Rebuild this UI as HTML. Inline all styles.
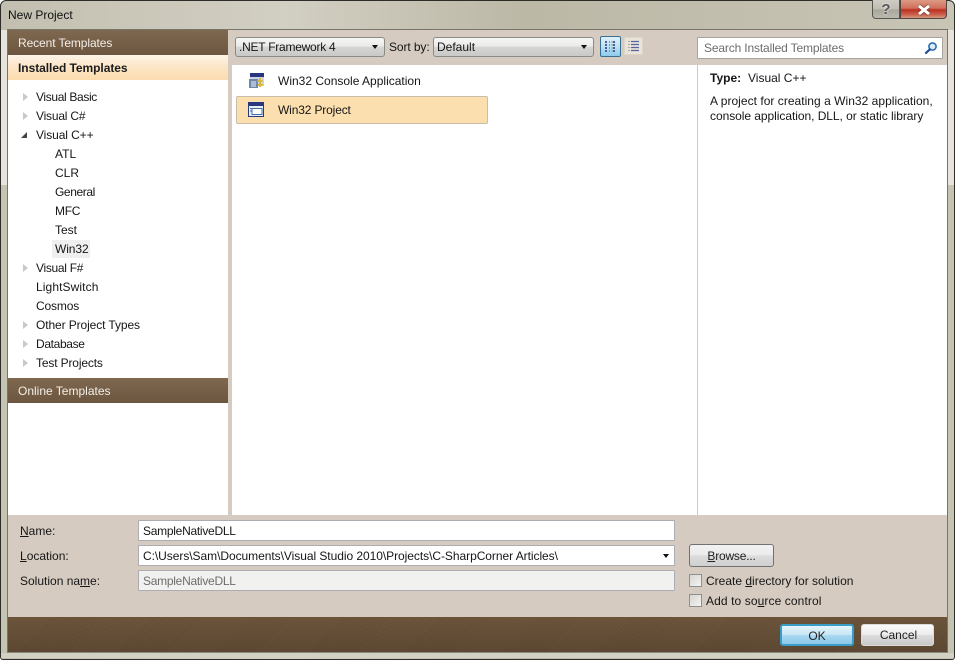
<!DOCTYPE html>
<html><head><meta charset="utf-8"><title>New Project</title>
<style>
html,body{margin:0;padding:0;width:955px;height:660px;overflow:hidden;background:#fff}
body{position:relative;font:12px/16px "Liberation Sans",sans-serif;color:#161616}
.a,.t{position:absolute}
.t{white-space:nowrap}
.hdr{background:linear-gradient(#7f6850,#6d563f);color:#f3eee8}
.tw{width:0;height:0;position:absolute;border-style:solid}
.c{left:23px;border-width:4px 0 4px 5px;border-color:transparent transparent transparent #c9c9c9}
.combo{position:absolute;height:18px;border:1px solid #8a8a86;border-radius:3px;background:linear-gradient(#f6f6f5 0,#ebebea 45%,#d6d6d4 50%,#c9c9c7 100%)}
.arr{position:absolute;width:0;height:0;border-style:solid;border-width:4px 3.5px 0;border-color:#111 transparent transparent}
.inp{position:absolute;background:#fff;border:1px solid #abadb3;border-radius:1px;box-sizing:border-box}
.cb{position:absolute;width:11px;height:11px;border:1px solid #8e8f8f;background:linear-gradient(135deg,#d5d5d3,#f4f4f3)}
.btn{position:absolute;box-sizing:border-box;border:1px solid #707070;border-radius:3px;background:linear-gradient(#f2f2f2 0,#ebebeb 48%,#dddddd 50%,#cfcfcf 100%);text-align:center}
u{text-decoration:underline}
</style></head><body>
<!-- window frame -->
<div class="a" style="left:0;top:0;width:955px;height:660px;background:linear-gradient(90deg,#c3bfb0 0,#d2cfc3 30%,#bcb8a6 55%,#c8c5b6 100%);box-sizing:border-box;border:1px solid #2c2c28;border-radius:6px 6px 3px 3px"></div>
<div class="a" style="left:1px;top:185px;width:6px;height:470px;background:#c5c3b2"></div>
<div class="a" style="left:948px;top:185px;width:6px;height:470px;background:#c5c3b2"></div>
<div class="a" style="left:1px;top:30px;width:6px;height:155px;background:#e6e4dc"></div>
<div class="a" style="left:948px;top:30px;width:6px;height:155px;background:#e6e4dc"></div>
<div class="a" style="left:1px;top:653px;width:953px;height:5px;background:#d3d1c4"></div>
<div class="t" style="left:8px;top:7px;color:#111">New Project</div>
<!-- caption buttons -->
<div class="a" style="left:872px;top:0;width:28px;height:19px;box-sizing:border-box;border:1px solid #55554f;border-top:0;border-radius:0 0 0 4px;background:linear-gradient(#cfcdc3,#bfbdb2 50%,#a9a79b 55%,#bcbab0);color:#555;text-align:center;font:bold 15px/19px 'Liberation Sans',sans-serif;text-shadow:0 0 2px #fff">?</div>
<div class="a" style="left:900px;top:0;width:47px;height:19px;box-sizing:border-box;border:1px solid #55453f;border-top:0;border-radius:0 0 4px 0;background:linear-gradient(#dd9a85,#d0705a 45%,#bb3020 55%,#cc6a55 85%,#d49b85)"></div>
<svg class="a" style="left:915px;top:3px" width="18" height="14" viewBox="0 0 18 14"><path d="M4 3L14 11M14 3L4 11" stroke="#5a3a30" stroke-opacity=".5" stroke-width="5"/><path d="M4 3L14 11M14 3L4 11" stroke="#fff" stroke-width="3"/></svg>
<!-- client -->
<div class="a" style="left:7px;top:29px;width:941px;height:624px;background:#d5cbc0;box-sizing:border-box;border:1px solid #77746a;border-bottom-color:#8a887c"></div>
<!-- left panel -->
<div class="a" style="left:8px;top:30px;width:220px;height:485px;background:#fff"></div>
<div class="a hdr" style="left:8px;top:30px;width:220px;height:25px"></div>
<div class="t" style="left:18px;top:35px;color:#f3eee8;letter-spacing:-.1px">Recent Templates</div>
<div class="a" style="left:8px;top:55px;width:220px;height:25px;background:linear-gradient(#fdf4e8,#fbe6c8 45%,#fbdcae)"></div>
<div class="t" style="left:18px;top:60px;font-weight:bold;color:#1c1c1c;letter-spacing:-.05px">Installed Templates</div>
<div class="tw c" style="top:93px"></div><div class="t" style="left:36px;top:89px;letter-spacing:-.35px">Visual Basic</div>
<div class="tw c" style="top:112px"></div><div class="t" style="left:36px;top:108px;letter-spacing:-.2px">Visual C#</div>
<div class="tw" style="left:21px;top:132px;border-width:0 0 6px 6px;border-color:transparent transparent #444 transparent"></div><div class="t" style="left:36px;top:127px;letter-spacing:-.1px">Visual C++</div>
<div class="t" style="left:55px;top:146px">ATL</div>
<div class="t" style="left:55px;top:165px">CLR</div>
<div class="t" style="left:55px;top:184px;letter-spacing:-.4px">General</div>
<div class="t" style="left:55px;top:203px;letter-spacing:-.3px">MFC</div>
<div class="t" style="left:55px;top:222px">Test</div>
<div class="a" style="left:52px;top:240px;width:38px;height:18px;background:#efefef"></div>
<div class="t" style="left:55px;top:241px;letter-spacing:-.1px">Win32</div>
<div class="tw c" style="top:264px"></div><div class="t" style="left:36px;top:260px;letter-spacing:-.3px">Visual F#</div>
<div class="t" style="left:36px;top:279px;letter-spacing:.1px">LightSwitch</div>
<div class="t" style="left:36px;top:298px;letter-spacing:-.15px">Cosmos</div>
<div class="tw c" style="top:321px"></div><div class="t" style="left:36px;top:317px;letter-spacing:-.1px">Other Project Types</div>
<div class="tw c" style="top:340px"></div><div class="t" style="left:36px;top:336px;letter-spacing:-.35px">Database</div>
<div class="tw c" style="top:359px"></div><div class="t" style="left:36px;top:355px;letter-spacing:-.15px">Test Projects</div>
<div class="a hdr" style="left:8px;top:378px;width:220px;height:25px"></div>
<div class="t" style="left:18px;top:383px;color:#f3eee8">Online Templates</div>
<!-- center -->
<div class="a" style="left:232px;top:65px;width:465px;height:450px;background:#fff"></div>
<div class="a" style="left:697px;top:65px;width:1px;height:450px;background:#cfc9c0"></div>
<div class="a" style="left:698px;top:65px;width:249px;height:450px;background:#fff"></div>
<!-- toolbar -->
<div class="combo" style="left:235px;top:37px;width:148px"><div class="t" style="left:3px;top:1px;letter-spacing:-.25px">.NET Framework 4</div><div class="arr" style="left:136px;top:7px"></div></div>
<div class="t" style="left:389px;top:39px;letter-spacing:-.1px">Sort by:</div>
<div class="combo" style="left:433px;top:37px;width:159px"><div class="t" style="left:3px;top:1px">Default</div><div class="arr" style="left:147px;top:7px"></div></div>
<!-- view buttons -->
<div class="a" style="left:600px;top:36px;width:19px;height:19px;border:1px solid #3b6f8f;border-radius:2px;background:linear-gradient(#dff0f9,#bfe2f4 50%,#8ccbec)"></div>
<svg class="a" style="left:600px;top:36px" width="46" height="21" viewBox="0 0 46 21">
<g stroke="#4f5f9a" stroke-width="2" stroke-dasharray="2 1" fill="none"><path d="M6 5V17M14 5V17"/></g>
<g stroke="#8a96a8" stroke-width="1" stroke-dasharray="2 1" fill="none"><path d="M9.5 5V17M12 5V17"/></g>
<rect x="24.5" y="1.5" width="18" height="17" fill="#e9e3da" stroke="#dcd5ca"/>
<g stroke="#5565a5" stroke-width="1.3" fill="none"><path d="M31 5.5H39M31 8.5H39M31 11.5H39M31 14.5H39"/></g>
<g stroke="#a8a8a8" stroke-width="1" fill="none"><path d="M28 5.5H30M28 8.5H30M28 11.5H30M28 14.5H30"/></g>
</svg>
<!-- search -->
<div class="inp" style="left:697px;top:37px;width:246px;height:22px;border-color:#a8a59c"></div>
<div class="t" style="left:704px;top:40px;color:#6d6d6d;letter-spacing:-.15px">Search Installed Templates</div>
<svg class="a" style="left:924px;top:41px" width="14" height="14" viewBox="0 0 14 14"><circle cx="8.5" cy="5.5" r="3.6" fill="#dcebf7" stroke="#2f6fb0" stroke-width="1.6"/><path d="M5.8 8.3L2 12" stroke="#1e4f90" stroke-width="2.2" stroke-linecap="round"/></svg>
<!-- items -->
<svg class="a" style="left:248px;top:72px" width="17" height="17" viewBox="0 0 17 17">
<rect x="2" y="1" width="14" height="4" fill="#29357e"/><rect x="2" y="5" width="14" height="9" fill="#cfd5df"/><rect x="1" y="7" width="9" height="9" fill="#6d88a8"/><path d="M3 10H8M3 12H8M3 14H8" stroke="#eef" stroke-width="1"/><path d="M12 6v9M9.5 9h5M10 13h5" stroke="#d8b93a" stroke-width="2"/>
</svg>
<div class="t" style="left:278px;top:73px">Win32 Console Application</div>
<div class="a" style="left:236px;top:96px;width:252px;height:28px;box-sizing:border-box;background:#fcdfae;border:1px solid #c8bda8;border-radius:2px"></div>
<svg class="a" style="left:248px;top:102px" width="16" height="15" viewBox="0 0 16 15">
<rect x=".5" y=".5" width="15" height="14" fill="#e8eef5" stroke="#27397f"/><rect x="1" y="1" width="14" height="3" fill="#27397f"/><rect x="4" y="6.5" width="10" height="6" fill="#fff" stroke="#3f6ea8"/><path d="M2 6.5H4M2 9H4" stroke="#3f6ea8"/>
</svg>
<div class="t" style="left:278px;top:102px;letter-spacing:-.15px">Win32 Project</div>
<!-- right -->
<div class="t" style="left:710px;top:70px;font-weight:bold">Type:</div>
<div class="t" style="left:748px;top:70px">Visual C++</div>
<div class="t" style="left:710px;top:93px;letter-spacing:.03px">A project for creating a Win32 application,</div>
<div class="t" style="left:710px;top:108px;letter-spacing:-.05px">console application, DLL, or static library</div>
<!-- form -->
<div class="t" style="left:20px;top:523px"><u>N</u>ame:</div>
<div class="t" style="left:20px;top:548px"><u>L</u>ocation:</div>
<div class="t" style="left:20px;top:573px">Solution na<u>m</u>e:</div>
<div class="inp" style="left:138px;top:520px;width:537px;height:21px"></div>
<div class="t" style="left:143px;top:523px;letter-spacing:-.27px">SampleNativeDLL</div>
<div class="inp" style="left:138px;top:545px;width:537px;height:21px"></div>
<div class="t" style="left:143px;top:548px;letter-spacing:-.05px">C:\Users\Sam\Documents\Visual Studio 2010\Projects\C-SharpCorner Articles\</div>
<div class="arr" style="left:663px;top:554px"></div>
<div class="inp" style="left:138px;top:570px;width:537px;height:21px;background:#f1f1ef"></div>
<div class="t" style="left:143px;top:573px;color:#6d6d6d;letter-spacing:-.27px">SampleNativeDLL</div>
<div class="btn" style="left:689px;top:544px;width:85px;height:23px;line-height:22px;color:#222;letter-spacing:-.2px"><u>B</u>rowse...</div>
<div class="cb" style="left:689px;top:574px"></div>
<div class="t" style="left:706px;top:573px">Create <u>d</u>irectory for solution</div>
<div class="cb" style="left:689px;top:594px"></div>
<div class="t" style="left:706px;top:593px;letter-spacing:.1px">Add to so<u>u</u>rce control</div>
<!-- footer -->
<div class="a" style="left:8px;top:617px;width:939px;height:35px;background:repeating-linear-gradient(135deg,rgba(255,255,255,.04) 0 1px,rgba(0,0,0,.04) 1px 2px),linear-gradient(#6b5238,#5a452f)"></div>
<div class="btn" style="left:780px;top:624px;width:74px;height:22px;line-height:20px;border:2px solid #3c9cc8;background:linear-gradient(#e6f4fb,#c8e6f6 48%,#a9d8f1 52%,#8cc9ea);color:#222">OK</div>
<div class="btn" style="left:861px;top:624px;width:73px;height:22px;line-height:21px;border-color:#dcdcdc;background:linear-gradient(#fafafa,#ececec 48%,#dcdcdc 52%,#c8c8c8);color:#222;padding-left:2px">Cancel</div>
</body></html>
